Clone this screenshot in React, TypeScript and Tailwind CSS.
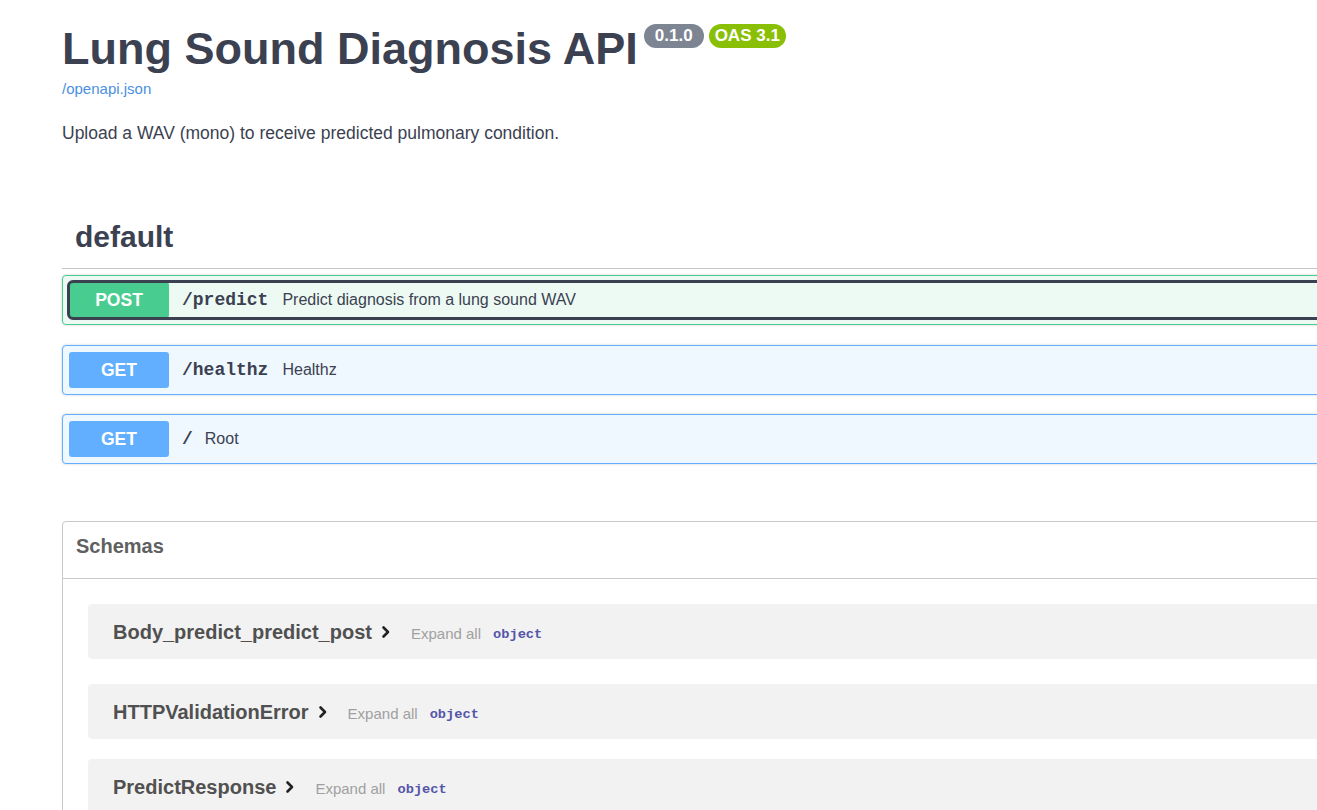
import React from "react";

type Op = {
  method: "POST" | "GET";
  path: string;
  summary: string;
  focused?: boolean;
};

const ops: Op[] = [
  { method: "POST", path: "/predict", summary: "Predict diagnosis from a lung sound WAV", focused: true },
  { method: "GET", path: "/healthz", summary: "Healthz" },
  { method: "GET", path: "/", summary: "Root" },
];

const schemas = ["Body_predict_predict_post", "HTTPValidationError", "PredictResponse"];

const Chevron = () => (
  <svg width="10" height="14" viewBox="0 0 10 14" className="ml-[9px] shrink-0" aria-hidden="true">
    <polyline points="2.5,2.5 7,7 2.5,11.5" fill="none" stroke="#222" strokeWidth="2.6" strokeLinecap="round" strokeLinejoin="round" />
  </svg>
);

const OpBlock = ({ op, className }: { op: Op; className?: string }) => {
  const isPost = op.method === "POST";
  return (
    <div
      className={
        "h-[50px] rounded-[4px] border shadow-[0_0_3px_rgba(0,0,0,0.19)] px-[6px] flex items-center " +
        (isPost ? "border-[#49cc90] bg-[#edfaf4] " : "border-[#61affe] bg-[#eff7ff] ") +
        (className ?? "")
      }
    >
      <div
        className={
          "flex items-center h-[36px] w-full rounded-[4px] " +
          (op.focused ? "outline-[3px] outline outline-[#3b4151] -outline-offset-[1px]" : "")
        }
      >
        <span
          className={
            "w-[100px] h-[36px] rounded-[3px] flex items-center justify-center text-white font-bold text-[17.5px] " +
            (isPost ? "bg-[#49cc90]" : "bg-[#61affe]")
          }
        >
          {op.method}
        </span>
        <span className="ml-[13px] font-['Liberation_Mono',monospace] font-bold text-[18px] text-[#3b4151]">
          {op.path}
        </span>
        <span className={(op.path === "/" ? "ml-[12px]" : "ml-[14px]") + " text-[16px] text-[#3b4151]"}>
          {op.summary}
        </span>
      </div>
    </div>
  );
};

export default function App() {
  return (
    <div className="w-[1317px] h-[810px] overflow-hidden bg-white font-['Liberation_Sans',Arial,sans-serif]">
      <div className="ml-[62px] w-[1420px]">
        {/* info */}
        <div className="pt-[23px] flex items-start">
          <h2 className="text-[45px] leading-[52px] font-bold text-[#3b4151]">Lung Sound Diagnosis API</h2>
          <div className="ml-[6px] mt-[1px] flex gap-[5px]">
            <span className="h-[24px] px-[11px] rounded-full bg-[#7d8492] text-white font-bold text-[17px] leading-[24px]">
              0.1.0
            </span>
            <span className="h-[24px] px-[6px] rounded-full bg-[#89bf04] text-white font-bold text-[17px] leading-[24px]">
              OAS 3.1
            </span>
          </div>
        </div>
        <a className="block mt-[5px] text-[15px] leading-[18px] text-[#4990e2]" href="#">
          /openapi.json
        </a>
        <p className="mt-[24px] text-[17.5px] leading-[22px] text-[#3b4151]">
          Upload a WAV (mono) to receive predicted pulmonary condition.
        </p>

        {/* tag */}
        <div className="mt-[75px] h-[50px] border-b border-[#c4c6cb] pl-[13px]">
          <h3 className="text-[30px] leading-[36px] font-bold text-[#3b4151]">default</h3>
        </div>
        <OpBlock op={ops[0]} className="mt-[6px]" />
        <OpBlock op={ops[1]} className="mt-[20px]" />
        <OpBlock op={ops[2]} className="mt-[19px]" />

        {/* schemas */}
        <section className="mt-[57px] rounded-[4px] border border-[#c8c9cd] pb-[20px]">
          <div className="h-[57px] border-b border-[#c8c9cd] pl-[13px] pb-[8px] flex items-center">
            <h4 className="text-[20px] font-bold text-[#606060]">Schemas</h4>
          </div>
          {schemas.map((name, i) => (
            <div
              key={name}
              className={
                "mx-[25px] h-[55px] rounded-[4px] bg-[#f2f2f2] pl-[25px] flex items-center " +
                (i === 2 ? "mt-[20px]" : "mt-[25px]")
              }
            >
              <span className="text-[20px] font-bold text-[#505050]">{name}</span>
              <Chevron />
              <span className="ml-[20px] pt-[5px] text-[15px] text-[#a0a0a0]">Expand all</span>
              <span className="ml-[12px] pt-[7px] font-['Liberation_Mono',monospace] font-bold text-[13.7px] text-[#55a]">
                object
              </span>
            </div>
          ))}
        </section>
      </div>
    </div>
  );
}
